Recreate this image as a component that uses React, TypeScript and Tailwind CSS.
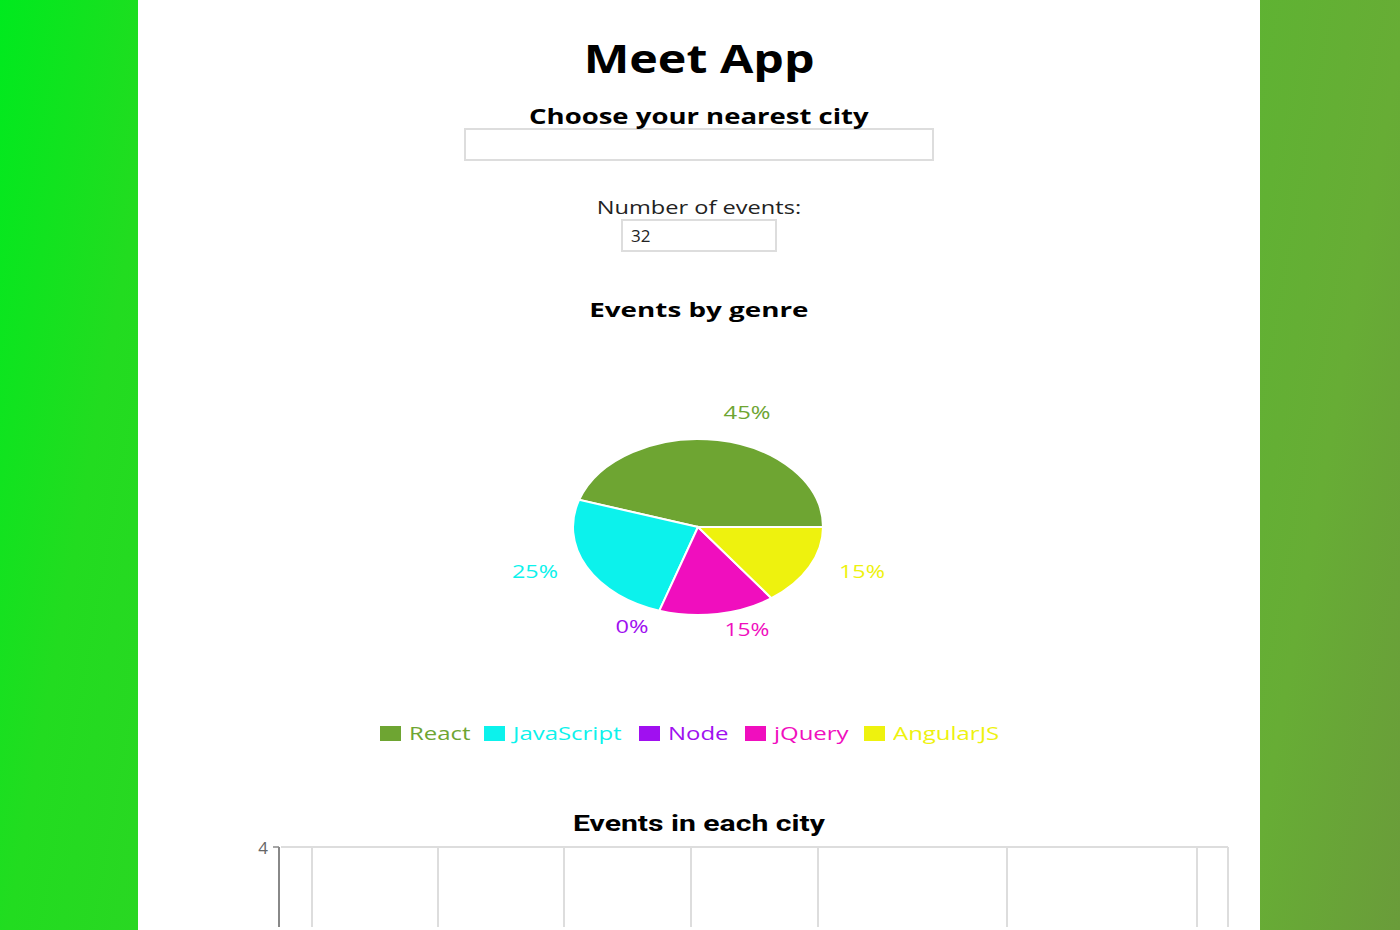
const font = { fontFamily: '"Open Sans", "Noto Sans", sans-serif' };

const genres = [
  { name: 'React', color: '#6ea532', w: 59 },
  { name: 'JavaScript', color: '#0cf2ec', w: 110 },
  { name: 'Node', color: '#a010f0', w: 61 },
  { name: 'jQuery', color: '#f00ebe', w: 74 },
  { name: 'AngularJS', color: '#eef20e', w: 109 },
];

// slices: start/end angle in degrees, counterclockwise from 3 o'clock
const slices = [
  { color: '#6ea532', a0: 0, a1: 162 },
  { color: '#0cf2ec', a0: 162, a1: 252 },
  { color: '#f00ebe', a0: 252, a1: 306 },
  { color: '#eef20e', a0: 306, a1: 360 },
];

const labels = [
  { text: '45%', color: '#6ea532', x: 748, y: 412, w: 47 },
  { text: '25%', color: '#0cf2ec', x: 536, y: 571, w: 46 },
  { text: '15%', color: '#eef20e', x: 863, y: 571, w: 46 },
  { text: '0%', color: '#a010f0', x: 633, y: 626, w: 33 },
  { text: '15%', color: '#f00ebe', x: 748, y: 629, w: 45 },
];

function slicePath(cx: number, cy: number, rx: number, ry: number, a0: number, a1: number) {
  const r = (d: number) => (d * Math.PI) / 180;
  const x0 = cx + rx * Math.cos(r(a0));
  const y0 = cy - ry * Math.sin(r(a0));
  const x1 = cx + rx * Math.cos(r(a1));
  const y1 = cy - ry * Math.sin(r(a1));
  const large = a1 - a0 > 180 ? 1 : 0;
  return `M${cx},${cy} L${x0},${y0} A${rx},${ry} 0 ${large} 0 ${x1},${y1} Z`;
}

function GenrePie() {
  // svg covers page x 400..1000, y 380..660
  const ox = 400;
  const oy = 380;
  return (
    <svg width="600" height="280" viewBox="0 0 600 280" className="block">
      {slices.map((s, i) => (
        <path
          key={i}
          d={slicePath(699 - ox, 527 - oy, 125, 88, s.a0, s.a1)}
          fill={s.color}
          stroke="#fff"
          strokeWidth="2"
        />
      ))}
      {labels.map((l, i) => (
        <text
          key={i}
          x={l.x - ox - l.w / 2}
          y={l.y - oy}
          fill={l.color}
          fontSize="18"
          dominantBaseline="central"
          textLength={l.w}
          lengthAdjust="spacingAndGlyphs"
          style={font}
        >
          {l.text}
        </text>
      ))}
    </svg>
  );
}

function CityChart() {
  const grid = [312, 438, 564, 691, 818, 1007, 1197, 1228].map(x => x - 138);
  return (
    <svg width="1122" height="90" viewBox="0 0 1122 90" className="block">
      <line x1="143" y1="10" x2="1090" y2="10" stroke="#ddd" strokeWidth="2" />
      {grid.map(x => (
        <line key={x} x1={x} y1="10" x2={x} y2="90" stroke="#ddd" strokeWidth="2" />
      ))}
      <line x1="141" y1="10" x2="141" y2="90" stroke="#888" strokeWidth="2" />
      <line x1="135" y1="10" x2="141" y2="10" stroke="#888" strokeWidth="1.5" />
      <text x="130" y="10" fill="#666" fontSize="17" textAnchor="end" dominantBaseline="central" style={font}>
        4
      </text>
    </svg>
  );
}

export default function App() {
  return (
    <div className="h-[930px] overflow-hidden bg-[linear-gradient(100deg,#00ea1e_0%,#22dc20_11%,#67ad35_90%,#6a9c3a_100%)]">
      <div className="ml-[138px] mr-[140px] h-full bg-white flex flex-col items-center text-black" style={font}>
        <h1 className="mt-[34px] text-[39px] font-bold leading-[48px] scale-x-[1.24]">Meet App</h1>
        <h3 className="mt-[20px] text-[22px] font-bold leading-[26px] scale-x-[1.25]">Choose your nearest city</h3>
        <input className="w-[470px] h-[33px] border-2 border-[#ddd] outline-none" />
        <label className="mt-[34px] text-[18px] leading-[24px] text-[#222] scale-x-[1.31]">Number of events:</label>
        <input
          defaultValue="32"
          className="w-[156px] h-[33px] border-2 border-[#ddd] outline-none px-2 text-[17px] text-[#222]"
        />
        <h4 className="mt-[45px] text-[20px] font-bold leading-[26px] scale-x-[1.39]">Events by genre</h4>
        <div className="mt-[57px]">
          <GenrePie />
        </div>
        <div className="mt-[61px] mr-[16px] flex items-center gap-[16px] text-[18px] leading-[24px]">
          {genres.map(g => (
            <div key={g.name} className="flex items-center gap-[8px]" style={{ color: g.color }}>
              <span className="w-[21px] h-[15px]" style={{ backgroundColor: g.color }} />
              <span className="block whitespace-nowrap" style={{ width: g.w }}>
                <span className="inline-block origin-left scale-x-[1.33]">{g.name}</span>
              </span>
            </div>
          ))}
        </div>
        <h4
          className="mt-[66px] text-[22px] font-bold leading-[26px] scale-x-[1.37]"
          style={{ fontFamily: 'Roboto, "Liberation Sans", sans-serif' }}
        >
          Events in each city
        </h4>
        <div className="self-stretch">
          <CityChart />
        </div>
      </div>
    </div>
  );
}
